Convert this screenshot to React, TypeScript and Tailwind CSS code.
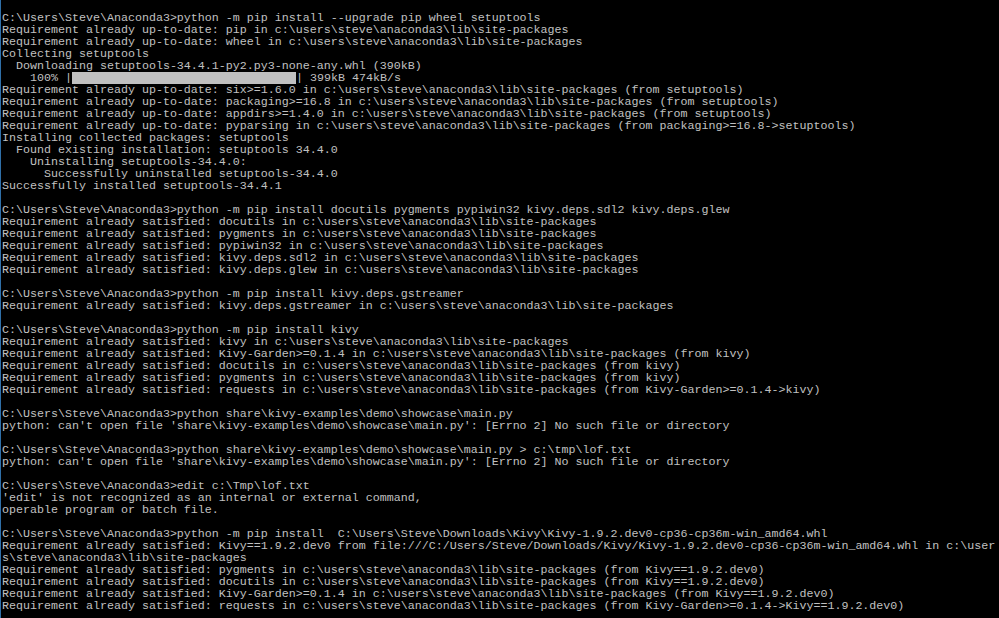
import React from "react";

const prompt = "C:\\Users\\Steve\\Anaconda3>";
const site = "c:\\users\\steve\\anaconda3\\lib\\site-packages";

const before: string[] = [
  `${prompt}python -m pip install --upgrade pip wheel setuptools`,
  `Requirement already up-to-date: pip in ${site}`,
  `Requirement already up-to-date: wheel in ${site}`,
  "Collecting setuptools",
  "  Downloading setuptools-34.4.1-py2.py3-none-any.whl (390kB)",
];

const after: string[] = [
  `Requirement already up-to-date: six>=1.6.0 in ${site} (from setuptools)`,
  `Requirement already up-to-date: packaging>=16.8 in ${site} (from setuptools)`,
  `Requirement already up-to-date: appdirs>=1.4.0 in ${site} (from setuptools)`,
  `Requirement already up-to-date: pyparsing in ${site} (from packaging>=16.8->setuptools)`,
  "Installing collected packages: setuptools",
  "  Found existing installation: setuptools 34.4.0",
  "    Uninstalling setuptools-34.4.0:",
  "      Successfully uninstalled setuptools-34.4.0",
  "Successfully installed setuptools-34.4.1",
  "",
  `${prompt}python -m pip install docutils pygments pypiwin32 kivy.deps.sdl2 kivy.deps.glew`,
  `Requirement already satisfied: docutils in ${site}`,
  `Requirement already satisfied: pygments in ${site}`,
  `Requirement already satisfied: pypiwin32 in ${site}`,
  `Requirement already satisfied: kivy.deps.sdl2 in ${site}`,
  `Requirement already satisfied: kivy.deps.glew in ${site}`,
  "",
  `${prompt}python -m pip install kivy.deps.gstreamer`,
  `Requirement already satisfied: kivy.deps.gstreamer in ${site}`,
  "",
  `${prompt}python -m pip install kivy`,
  `Requirement already satisfied: kivy in ${site}`,
  `Requirement already satisfied: Kivy-Garden>=0.1.4 in ${site} (from kivy)`,
  `Requirement already satisfied: docutils in ${site} (from kivy)`,
  `Requirement already satisfied: pygments in ${site} (from kivy)`,
  `Requirement already satisfied: requests in ${site} (from Kivy-Garden>=0.1.4->kivy)`,
  "",
  `${prompt}python share\\kivy-examples\\demo\\showcase\\main.py`,
  "python: can't open file 'share\\kivy-examples\\demo\\showcase\\main.py': [Errno 2] No such file or directory",
  "",
  `${prompt}python share\\kivy-examples\\demo\\showcase\\main.py > c:\\tmp\\lof.txt`,
  "python: can't open file 'share\\kivy-examples\\demo\\showcase\\main.py': [Errno 2] No such file or directory",
  "",
  `${prompt}edit c:\\Tmp\\lof.txt`,
  "'edit' is not recognized as an internal or external command,",
  "operable program or batch file.",
  "",
  `${prompt}python -m pip install  C:\\Users\\Steve\\Downloads\\Kivy\\Kivy-1.9.2.dev0-cp36-cp36m-win_amd64.whl`,
  "Requirement already satisfied: Kivy==1.9.2.dev0 from file:///C:/Users/Steve/Downloads/Kivy/Kivy-1.9.2.dev0-cp36-cp36m-win_amd64.whl in c:\\user",
  "s\\steve\\anaconda3\\lib\\site-packages",
  `Requirement already satisfied: pygments in ${site} (from Kivy==1.9.2.dev0)`,
  `Requirement already satisfied: docutils in ${site} (from Kivy==1.9.2.dev0)`,
  `Requirement already satisfied: Kivy-Garden>=0.1.4 in ${site} (from Kivy==1.9.2.dev0)`,
  `Requirement already satisfied: requests in ${site} (from Kivy-Garden>=0.1.4->Kivy==1.9.2.dev0)`,
];

function Line({ text }: { text: string }) {
  return <div className="h-[12px] whitespace-pre">{text}</div>;
}

export default function App() {
  return (
    <div className="w-[999px] h-[618px] overflow-hidden bg-black border-l border-[#2f6fa8]">
      <div
        className="pt-[12px] pl-[1px] text-[#c0c0c0] text-[11.667px] leading-[12px]"
        style={{ fontFamily: '"Liberation Mono", "DejaVu Sans Mono", monospace' }}
      >
        {before.map((t, i) => (
          <Line key={"b" + i} text={t} />
        ))}
        <div className="h-[12px] whitespace-pre flex">
          <span>{"    100% |"}</span>
          <span className="inline-block w-[224px] h-[12px] bg-[#c0c0c0]" />
          <span>{"| 399kB 474kB/s"}</span>
        </div>
        {after.map((t, i) => (
          <Line key={"a" + i} text={t} />
        ))}
      </div>
    </div>
  );
}
